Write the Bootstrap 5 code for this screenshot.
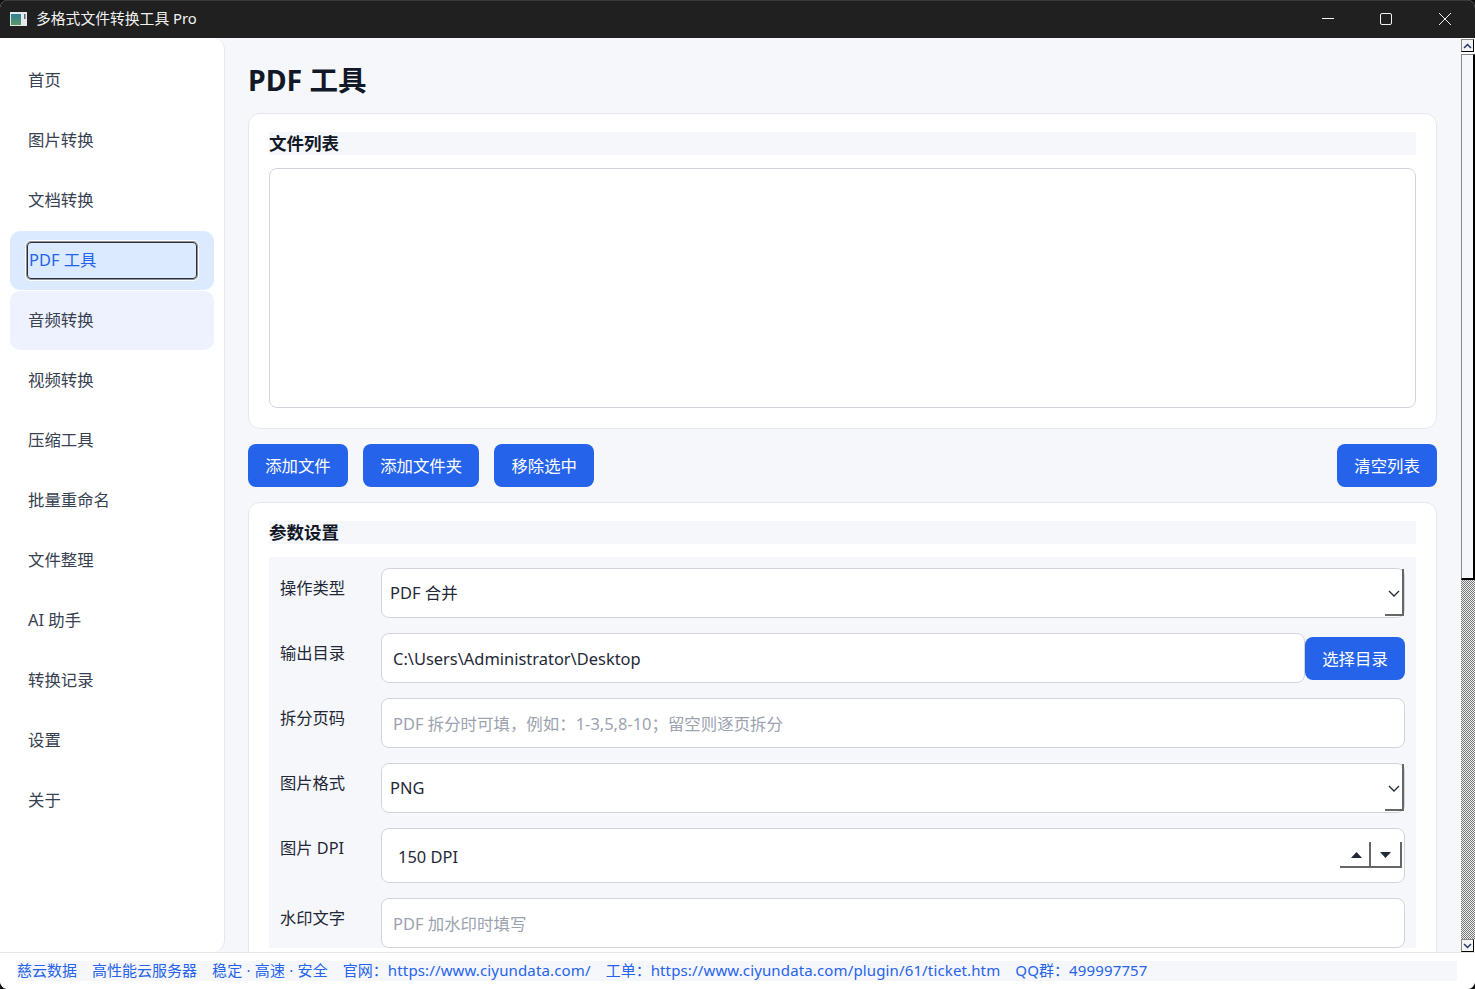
<!DOCTYPE html>
<html lang="zh-CN">
<head>
  <meta charset="UTF-8" />
  <meta name="viewport" content="width=device-width, initial-scale=1.0"/>
  <title>多格式文件转换工具 Pro</title>
  <link href="https://cdn.jsdelivr.net/npm/bootstrap@5.3.0/dist/css/bootstrap.min.css" rel="stylesheet"/>
  <style>
    html, body { height: 100%; margin: 0; background: #111; overflow: hidden; }
    body { font-family: "Noto Sans", "Noto Sans CJK SC", sans-serif; font-size: 16.4px; color: #111827; }

    .app-window { height: 989px; border-radius: 8px; overflow: hidden; background: #f6f7fb; }

    /* title bar */
    .title-bar { height: 38px; background: #202020; color: #f2f2f2; font-size: 14.8px; border-top: 1px solid #3a3a3a; }
    .title-icon { margin-left: 10px; margin-right: 9px; margin-top: -1px; }
    .title-text { margin-top: -3px; }
    .win-box { margin-right: 1px; margin-top: -1px; }
    .win-btn { width: 58.5px; height: 37px; }

    /* sidebar */
    .side-bar { width: 225px; background: #fff; border-right: 1px solid #e5e7eb; border-radius: 0 12px 12px 0; padding: 13px 10px; }
    .side-item { height: 59px; margin-bottom: 1px; border-radius: 10px; padding: 0 0 0 18px; color: #374151; }
    .side-item.is-active { background: #dbeafe; color: #2563eb; padding: 11px 17px; }
    .side-item.is-hover { background: #eef2ff; }
    .focus-box { height: 37px; border: 1px solid #2b2f38; border-radius: 4px; padding: 0 0 0 1px; box-shadow: 0 0 0 1px #8b8f98, 0 0 0 2px #fff; }

    /* main area */
    .main-pane { background: #f6f7fb; padding: 0 24px 0 23px; overflow: hidden; }
    .page-title { font-size: 28.5px; font-weight: 700; line-height: 38px; margin: 23px 0 14px; color: #111827; }
    .panel { background: #fff; border: 1px solid #e5e7eb; border-radius: 12px; padding: 18px 20px 20px; }
    .panel-head { background: #f6f7fb; font-size: 17.5px; font-weight: 700; line-height: 23px; height: 23px; margin-bottom: 13px; color: #111827; }
    .file-box { height: 240px; border: 1px solid #d1d5db; border-radius: 8px; background: #fff; }
    .blue-btn { background: #2563eb; color: #fff; border: 0; border-radius: 8px; height: 43px; padding: 2px 17.2px 0; font-size: 16.4px; }
    .blue-btn:hover { background: #2563eb; color: #fff; }
    .tool-row { margin: 15px 0; gap: 15px; }

    /* parameter form */
    .form-wrap { background: #f6f7fb; padding: 11px 11px 0; }
    .form-line { display: flex; margin-bottom: 15px; }
    .form-label-text { width: 101px; flex: none; padding-top: 8px; font-size: 16.3px; line-height: 24px; color: #1f2937; }
    .field-box { flex: 1; min-width: 0; height: 50px; background: #fff; border: 1.5px solid #d1d5db; border-radius: 8px; padding: 2px 0 0 11px; font-size: 16.45px; color: #1f2937; display: flex; align-items: center; }
    .field-box.is-hint { color: #9ca3af; }
    .field-box.is-select { padding: 0 0 0 8px; position: relative; }
    .field-box.is-spin { height: 55px; padding: 3px 0 0 16px; position: relative; }
    .select-drop { position: absolute; right: 0; top: 0; bottom: 1px; width: 19px; padding-top: 3px; border-right: 2px solid #666; border-bottom: 2px solid #666; display: flex; align-items: center; justify-content: center; }
    .spin-part { position: absolute; bottom: 14px; height: 26px; width: 31px; padding-top: 2px; border-bottom: 2px solid #666; display: flex; align-items: center; justify-content: center; }
    .spin-up { right: 33px; padding-left: 3px; border-right: 2px solid #666; }
    .spin-down { right: 2px; width: 31px; border-right: 2px solid #666; }
    .dir-btn { height: 43px; margin-top: 4px; width: 100px; flex: none; padding: 2px 0 0; }

    /* native looking scrollbar */
    .scroll-rail { width: 14px; background: #fff; padding-top: 1px; }
    .scroll-arrow { height: 13px; width: 13px; border: 1px solid #888; border-right-color: #000; border-bottom-color: #000; background: #f5f5f5; display: flex; align-items: center; justify-content: center; }
    .scroll-thumb { height: 526px; margin-top: 2px; border: 1px solid #888; border-right: 2px solid #000; border-bottom: 2px solid #000; background: #f6f7fb; }
    .scroll-track { flex: 1; background: repeating-conic-gradient(#777 0 25%, #eee 0 50%) 0 0 / 2px 2px; }

    /* footer */
    .foot-bar { height: 37px; background: #fff; border-top: 1px solid #e5e7eb; padding: 8px 18px 0 17px; }
    .foot-strip { height: 20px; background: #f6f7fb; color: #2563eb; font-size: 15px; line-height: 18px; white-space: nowrap; }
    .foot-strip span { margin-right: 15px; }
    .foot-strip em { font-style: normal; letter-spacing: .14px; }
    .foot-strip em.wide-dots { letter-spacing: .18px; }
  </style>
</head>
<body>
  <div class="app-window d-flex flex-column">

    <div class="title-bar d-flex align-items-center flex-shrink-0">
      <svg class="title-icon" width="17" height="14" viewBox="0 0 17 14">
        <defs>
          <linearGradient id="iconFill" x1="0" y1="0" x2="0" y2="1">
            <stop offset="0" stop-color="#2f7f98"/>
            <stop offset="1" stop-color="#5b9a62"/>
          </linearGradient>
        </defs>
        <rect width="17" height="14" fill="#e6e9ec"/>
        <rect x="1" y="2" width="10" height="11" fill="url(#iconFill)"/>
        <rect x="14" y="2" width="1.500" height="5" fill="#5a6b78"/>
      </svg>
      <span class="title-text">多格式文件转换工具 Pro</span>
      <div class="win-box ms-auto d-flex">
        <div class="win-btn d-flex align-items-center justify-content-center">
          <svg width="12" height="12" viewBox="0 0 12 12"><path d="M0 5.500h12" stroke="#f2f2f2" fill="none"/></svg>
        </div>
        <div class="win-btn d-flex align-items-center justify-content-center">
          <svg width="12" height="12" viewBox="0 0 12 12"><rect x=".5" y=".5" width="11" height="11" rx="1.500" stroke="#f2f2f2" fill="none"/></svg>
        </div>
        <div class="win-btn d-flex align-items-center justify-content-center">
          <svg width="12" height="12" viewBox="0 0 12 12"><path d="M0 0l12 12M12 0L0 12" stroke="#f2f2f2" fill="none"/></svg>
        </div>
      </div>
    </div>

    <div class="d-flex flex-grow-1" style="min-height:0">
      <div class="side-bar flex-shrink-0">
        <div class="side-item d-flex align-items-center">首页</div>
        <div class="side-item d-flex align-items-center">图片转换</div>
        <div class="side-item d-flex align-items-center">文档转换</div>
        <div class="side-item is-active"><div class="focus-box d-flex align-items-center">PDF 工具</div></div>
        <div class="side-item is-hover d-flex align-items-center">音频转换</div>
        <div class="side-item d-flex align-items-center">视频转换</div>
        <div class="side-item d-flex align-items-center">压缩工具</div>
        <div class="side-item d-flex align-items-center">批量重命名</div>
        <div class="side-item d-flex align-items-center">文件整理</div>
        <div class="side-item d-flex align-items-center">AI 助手</div>
        <div class="side-item d-flex align-items-center">转换记录</div>
        <div class="side-item d-flex align-items-center">设置</div>
        <div class="side-item d-flex align-items-center">关于</div>
      </div>

      <div class="main-pane flex-grow-1">
        <h1 class="page-title">PDF 工具</h1>

        <div class="panel">
          <div class="panel-head">文件列表</div>
          <div class="file-box"></div>
        </div>

        <div class="tool-row d-flex">
          <button class="btn blue-btn">添加文件</button>
          <button class="btn blue-btn">添加文件夹</button>
          <button class="btn blue-btn">移除选中</button>
          <button class="btn blue-btn ms-auto">清空列表</button>
        </div>

        <div class="panel">
          <div class="panel-head">参数设置</div>
          <div class="form-wrap">
            <div class="form-line">
              <div class="form-label-text">操作类型</div>
              <div class="field-box is-select">PDF 合并
                <div class="select-drop"><svg width="12" height="7" viewBox="0 0 12 7"><path d="M1 1l5 5 5-5" stroke="#1f2937" stroke-width="1.300" fill="none"/></svg></div>
              </div>
            </div>
            <div class="form-line">
              <div class="form-label-text">输出目录</div>
              <div class="field-box">C:\Users\Administrator\Desktop</div>
              <button class="btn blue-btn dir-btn">选择目录</button>
            </div>
            <div class="form-line">
              <div class="form-label-text">拆分页码</div>
              <div class="field-box is-hint">PDF 拆分时可填，例如：1-3,5,8-10；留空则逐页拆分</div>
            </div>
            <div class="form-line">
              <div class="form-label-text">图片格式</div>
              <div class="field-box is-select">PNG
                <div class="select-drop"><svg width="12" height="7" viewBox="0 0 12 7"><path d="M1 1l5 5 5-5" stroke="#1f2937" stroke-width="1.300" fill="none"/></svg></div>
              </div>
            </div>
            <div class="form-line">
              <div class="form-label-text">图片 DPI</div>
              <div class="field-box is-spin">150 DPI
                <div class="spin-part spin-up"><svg width="11" height="6" viewBox="0 0 11 6"><path d="M5.500 0L11 6H0z" fill="#1f2937"/></svg></div>
                <div class="spin-part spin-down"><svg width="11" height="6" viewBox="0 0 11 6"><path d="M0 0h11L5.500 6z" fill="#1f2937"/></svg></div>
              </div>
            </div>
            <div class="form-line">
              <div class="form-label-text">水印文字</div>
              <div class="field-box is-hint">PDF 加水印时填写</div>
            </div>
          </div>
        </div>
      </div>

      <div class="scroll-rail d-flex flex-column flex-shrink-0">
        <div class="scroll-arrow"><svg width="9" height="6" viewBox="0 0 9 6"><path d="M1 5l3.500-3.500L8 5" stroke="#1f3a6e" stroke-width="1.500" fill="none"/></svg></div>
        <div class="scroll-thumb"></div>
        <div class="scroll-track"></div>
        <div class="scroll-arrow"><svg width="9" height="6" viewBox="0 0 9 6"><path d="M1 1l3.500 3.500L8 1" stroke="#1f3a6e" stroke-width="1.500" fill="none"/></svg></div>
      </div>
    </div>

    <div class="foot-bar flex-shrink-0">
      <div class="foot-strip"><span>慈云数据</span><span>高性能云服务器</span><span><em class="wide-dots">稳定 · 高速 · 安全</em></span><span>官网：<em>https://www.ciyundata.com/</em></span><span>工单：<em>https://www.ciyundata.com/plugin/61/ticket.htm</em></span><span><em>QQ</em>群：<em>499997757</em></span></div>
    </div>
  </div>

  <script src="https://cdn.jsdelivr.net/npm/bootstrap@5.3.0/dist/js/bootstrap.bundle.min.js"></script>
</body>
</html>
